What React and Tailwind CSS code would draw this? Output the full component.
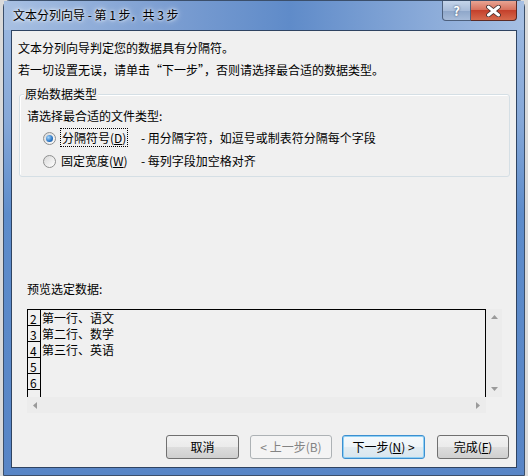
import React from 'react';

const font = { fontFamily: '"Microsoft YaHei", "Noto Sans CJK SC", "Noto Sans", sans-serif' };

const Radio = ({ checked }) => (
  <span className="flex h-[13px] w-[13px] shrink-0 items-center justify-center rounded-full border border-[#8e8f8f] bg-[linear-gradient(135deg,#d8d8d8,#ffffff)]">
    {checked && (
      <span className="h-[7px] w-[7px] rounded-full bg-[radial-gradient(circle_at_35%_35%,#a6d6fa,#2a75c4_60%,#0d4a8f)]" />
    )}
  </span>
);

const Button = ({ children, variant = 'normal', className = '' }) => {
  const styles = {
    normal: 'border-[#707070] bg-[linear-gradient(180deg,#f2f2f2_0%,#ebebeb_50%,#dddddd_51%,#cfcfcf_100%)] text-black',
    primary: 'border-[#3c8fd0] bg-[linear-gradient(180deg,#f4f9fc_0%,#eef4f8_50%,#e2ecf2_51%,#d8e6ee_100%)] text-black shadow-[inset_0_0_0_1px_#8fd0f4]',
    disabled: 'border-[#adb2b5] bg-[#f4f4f4] text-[#838383]',
  };
  return (
    <button className={`flex h-[24px] items-center justify-center rounded-[3px] border text-[12px] ${styles[variant]} ${className}`}>
      {children}
    </button>
  );
};

const App = () => {
  const rows = [
    { n: '2', text: '第一行、语文' },
    { n: '3', text: '第二行、数学' },
    { n: '4', text: '第三行、英语' },
    { n: '5', text: '' },
    { n: '6', text: '' },
    { n: '', text: '' },
  ];

  return (
    <div className="h-[476px] w-[528px] overflow-hidden bg-[#dadada] text-[12px] leading-[16px] text-black" style={font}>
      <div className="ml-[3px] flex h-[476px] w-[522px] flex-col rounded-t-[7px] border border-[#3b4f6b] bg-[linear-gradient(180deg,#9fbbe2_0%,#86a8d8_25%,#5d8ccb_45%,#5885c6_100%)]">
        {/* title bar */}
        <div className="flex h-[29px] shrink-0 items-start justify-between bg-[linear-gradient(90deg,#a8c0e2_0%,#7d9fd2_30%,#5f8bc9_55%,#88a9d8_80%,#a6bfe3_100%)] pr-[7px]">
          <div className="pl-[9px] pt-[6px] text-[12px] [text-shadow:0_0_6px_#fff,0_0_3px_#fff]">
            文本分列向导 - 第 1 步，共 3 步
          </div>
          <div className="flex">
            <div className="flex h-[20px] w-[29px] items-center justify-center rounded-bl-[4px] border border-t-0 border-[#4d607d] bg-[linear-gradient(180deg,#c4d4ea_0%,#a8bcd9_50%,#8ea6c9_51%,#a6bbd9_100%)] text-[13px] font-bold text-white [text-shadow:0_0_2px_#2b3b55]">
              ?
            </div>
            <div className="flex h-[20px] w-[46px] items-center justify-center rounded-br-[4px] border border-l-0 border-t-0 border-[#5b2a25] bg-[linear-gradient(180deg,#e8a493_0%,#d8735f_45%,#c4412c_50%,#d66a4d_100%)]">
              <svg width="15" height="12" viewBox="0 0 15 12">
                <path d="M2.5 2 L12.5 10 M12.5 2 L2.5 10" stroke="#3b2a2a" strokeWidth="4.6" strokeLinecap="round" />
                <path d="M2.5 2 L12.5 10 M12.5 2 L2.5 10" stroke="#fff" strokeWidth="3" strokeLinecap="round" />
              </svg>
            </div>
          </div>
        </div>

        {/* client area */}
        <div className="ml-[7px] h-[438px] w-[506px] border border-[#2f4462] bg-[#f0f0f0]">
          <div className="ml-[6px] mt-[9px]">文本分列向导判定您的数据具有分隔符。</div>
          <div className="ml-[6px] mt-[6px]">若一切设置无误，请单击“下一步”，否则请选择最合适的数据类型。</div>

          {/* group box */}
          <div className="relative ml-[7px] mt-[16px] h-[83px] w-[491px] rounded-[3px] border border-[#d5dfe5] shadow-[inset_1px_1px_0_#fff]">
            <span className="absolute -top-[9px] left-[4px] bg-[#f0f0f0] px-px">原始数据类型</span>
            <div className="ml-[7px] mt-[13px]">请选择最合适的文件类型:</div>
            <div className="mt-[6px] flex items-center pl-[23px]">
              <Radio checked />
              <span className="ml-[4px] w-[81px] shrink-0">
                <span className="border border-dotted border-black px-px">
                  分隔符号(<u>D</u>)
                </span>
              </span>
              <span>- 用分隔字符，如逗号或制表符分隔每个字段</span>
            </div>
            <div className="mt-[7px] flex items-center pl-[23px]">
              <Radio />
              <span className="ml-[5px] w-[80px] shrink-0">
                固定宽度(<u>W</u>)
              </span>
              <span>- 每列字段加空格对齐</span>
            </div>
          </div>

          <div className="ml-[15px] mt-[104px]">预览选定数据:</div>

          {/* preview */}
          <div className="ml-[15px] mt-[12px] w-[475px]">
            <div className="flex">
              <div className="h-[88px] w-[459px] overflow-hidden border border-b-0 border-black bg-[#f0f0f0] leading-[16px]">
                {rows.map((r, i) => (
                  <div key={i} className="flex h-[16px]">
                    <span className="w-[13px] shrink-0 border-b border-r border-black pl-[2px] text-[12px] leading-[17px]">
                      {r.n}
                    </span>
                    <span className="pl-px">{r.text}</span>
                  </div>
                ))}
              </div>
              <div className="flex h-[88px] w-[16px] flex-col items-center justify-between bg-[#ececec] py-[6px]">
                <svg width="7" height="4" viewBox="0 0 7 4"><path d="M3.5 0 L7 4 L0 4 Z" fill="#9a9a9a" /></svg>
                <svg width="7" height="4" viewBox="0 0 7 4"><path d="M0 0 L7 0 L3.5 4 Z" fill="#9a9a9a" /></svg>
              </div>
            </div>
            <div className="flex h-[16px] w-[459px] items-center justify-between bg-[#ececec] px-[6px]">
              <svg width="4" height="7" viewBox="0 0 4 7"><path d="M0 3.5 L4 0 L4 7 Z" fill="#9a9a9a" /></svg>
              <svg width="4" height="7" viewBox="0 0 4 7"><path d="M4 3.5 L0 0 L0 7 Z" fill="#9a9a9a" /></svg>
            </div>
          </div>

          {/* buttons */}
          <div className="mt-[22px] flex pl-[154px]">
            <Button className="w-[73px]">取消</Button>
            <Button variant="disabled" className="ml-[11px] w-[82px]">
              &lt; 上一步(B)
            </Button>
            <Button variant="primary" className="ml-[10px] w-[83px]">
              下一步(<u>N</u>) &gt;
            </Button>
            <Button className="ml-[12px] w-[72px]">
              完成(<u>F</u>)
            </Button>
          </div>
        </div>
      </div>
    </div>
  );
};

export default App;
